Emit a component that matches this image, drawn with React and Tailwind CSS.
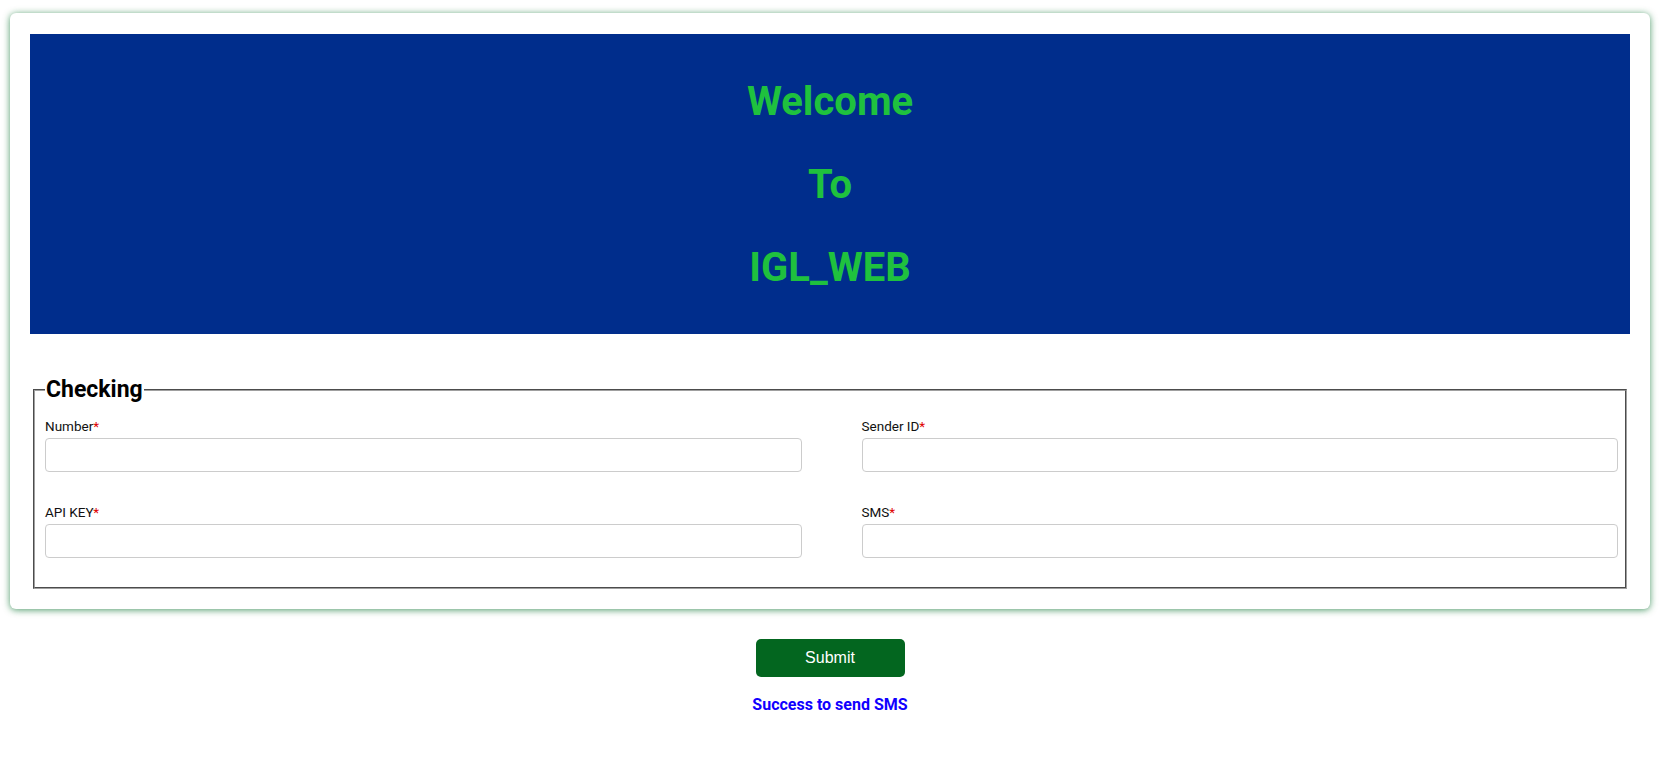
import React from "react";

function Field({ label }) {
  return (
    <div className="flex flex-col">
      <label className="text-[13.5px] leading-[16px] text-[#111] font-['Roboto',sans-serif] mb-[4px]">
        {label}
        <span className="text-[#e00000]">*</span>
      </label>
      <input
        type="text"
        className="h-[34px] w-full rounded-[4px] border border-[#cccccc] bg-white px-2 outline-none"
      />
    </div>
  );
}

export default function App() {
  return (
    <div className="w-[1660px] bg-white pt-[13px] pb-[40px] font-['Roboto',sans-serif]">
      <div className="mx-[10px] rounded-[6px] bg-white p-[20px] pt-[21px] shadow-[0_1px_7px_rgba(0,110,40,0.7)]">
        <div className="flex h-[300px] flex-col items-center justify-center bg-[#002d8c] text-[40px] font-bold text-[#1fc13e]">
          <div className="leading-[83px]">Welcome</div>
          <div className="leading-[83px]">To</div>
          <div className="leading-[83px]">IGL_WEB</div>
        </div>
        <fieldset className="mx-[3px] mt-[43px] border-2 border-[#a0a0a0] [border-style:groove] pl-[10px] pr-[7px] pb-[29px]">
          <legend className="px-[1px] text-[23px] font-bold leading-[26px] text-black">
            Checking
          </legend>
          <div className="mt-[15px] grid grid-cols-2 gap-x-[60px] gap-y-[32px]">
            <Field label="Number" />
            <Field label="Sender ID" />
            <Field label="API KEY" />
            <Field label="SMS" />
          </div>
        </fieldset>
      </div>
      <div className="mt-[30px] flex flex-col items-center">
        <button className="h-[38px] w-[149px] rounded-[5px] bg-[#03661f] font-['Liberation_Sans',Arial,sans-serif] text-[16px] text-white">
          Submit
        </button>
        <div className="mt-[16px] text-[16px] font-bold leading-[24px] text-[#1000ff]">
          Success to send SMS
        </div>
      </div>
    </div>
  );
}
